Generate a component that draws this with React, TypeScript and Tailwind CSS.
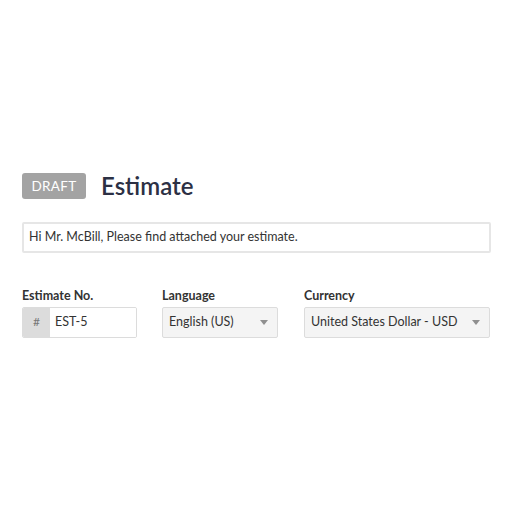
import { useState } from 'react';

function Caret() {
  return (
    <svg width="8" height="5" viewBox="0 0 8 5" className="shrink-0">
      <path d="M0 0 L8 0 L4 5 Z" fill="#8f8f8f" />
    </svg>
  );
}

function SelectBox({ value, width }: { value: string; width: string }) {
  return (
    <div className={`${width} h-[31px] flex items-center justify-between pl-[6px] pr-[9px] bg-[#f4f4f4] border border-[#dcdcdc] rounded-[2px] text-[12.5px] text-[#333]`}>
      <span>{value}</span>
      <Caret />
    </div>
  );
}

export default function App() {
  const [message] = useState('Hi Mr. McBill, Please find attached your estimate.');

  return (
    <div className="w-[512px] h-[512px] bg-white px-[22px] pt-[173px] font-['Lato','Open_Sans',sans-serif]">
      {/* Header */}
      <div className="flex items-center gap-[15px]">
        <span className="w-[64px] h-[26px] flex items-center justify-center rounded-[3px] bg-[#a3a3a3] text-white text-[13.5px] tracking-wide">DRAFT</span>
        <h1 className="text-[24px] font-semibold text-[#2c3044] leading-none">Estimate</h1>
      </div>

      {/* Message */}
      <div className="mt-[23px] w-[469px] h-[31px] flex items-center px-[5px] border-2 border-[#e6e6e6] rounded-[2px] text-[12.5px] text-[#333]">
        {message}
      </div>

      {/* Fields */}
      <div className="mt-[34px] flex">
        <div className="w-[140px]">
          <label className="block text-[12.5px] font-bold text-[#333] mb-[1px]">Estimate No.</label>
          <div className="w-[115px] h-[31px] flex border border-[#dcdcdc] rounded-[2px] overflow-hidden">
            <span className="w-[27px] bg-[#dcdcdc] flex items-center justify-center text-[12px] text-[#777]">#</span>
            <span className="flex-1 flex items-center pl-[5px] text-[12.5px] text-[#333] bg-white">EST-5</span>
          </div>
        </div>
        <div className="w-[142px]">
          <label className="block text-[12.5px] font-bold text-[#333] mb-[1px]">Language</label>
          <SelectBox value="English (US)" width="w-[116px]" />
        </div>
        <div>
          <label className="block text-[12.5px] font-bold text-[#333] mb-[1px]">Currency</label>
          <SelectBox value="United States Dollar - USD" width="w-[186px]" />
        </div>
      </div>
    </div>
  );
}
